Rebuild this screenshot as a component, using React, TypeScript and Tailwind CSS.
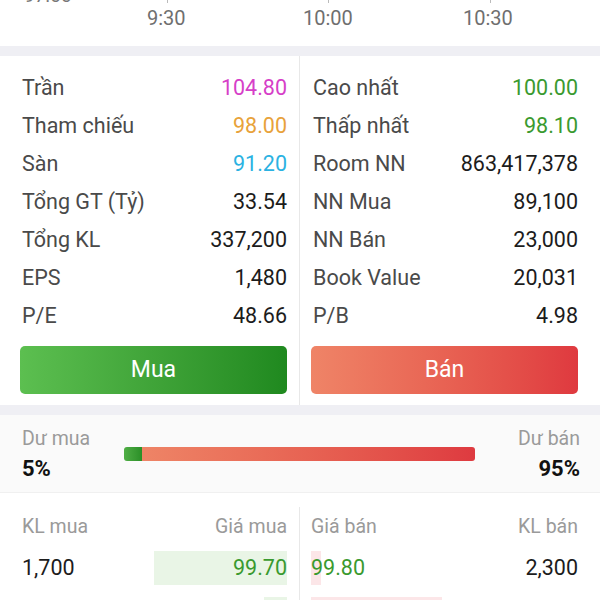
import React from 'react';

interface StatRow {
  label: string;
  value: string;
  color?: string;
}

const leftStats: StatRow[] = [
  { label: 'Trần', value: '104.80', color: 'text-[#d63fc8]' },
  { label: 'Tham chiếu', value: '98.00', color: 'text-[#e8a23a]' },
  { label: 'Sàn', value: '91.20', color: 'text-[#2bb2e2]' },
  { label: 'Tổng GT (Tỷ)', value: '33.54' },
  { label: 'Tổng KL', value: '337,200' },
  { label: 'EPS', value: '1,480' },
  { label: 'P/E', value: '48.66' },
];

const rightStats: StatRow[] = [
  { label: 'Cao nhất', value: '100.00', color: 'text-[#3a9a2f]' },
  { label: 'Thấp nhất', value: '98.10', color: 'text-[#3a9a2f]' },
  { label: 'Room NN', value: '863,417,378' },
  { label: 'NN Mua', value: '89,100' },
  { label: 'NN Bán', value: '23,000' },
  { label: 'Book Value', value: '20,031' },
  { label: 'P/B', value: '4.98' },
];

const bids = [
  { vol: '1,700', price: '99.70', pct: 100 },
  { vol: '8,500', price: '99.60', pct: 17 },
];

const asks = [
  { vol: '2,300', price: '99.80', pct: 8 },
  { vol: '5,100', price: '99.90', pct: 100 },
];

const StatList: React.FC<{ rows: StatRow[] }> = ({ rows }) => (
  <div className="flex flex-col">
    {rows.map((r) => (
      <div key={r.label} className="flex items-center justify-between h-[38px]">
        <span className="text-[#4a4a4a] pl-[2px]">{r.label}</span>
        <span className={r.color ?? 'text-[#1c1c1c]'}>{r.value}</span>
      </div>
    ))}
  </div>
);

export default function App() {
  return (
    <div className="w-[600px] h-[600px] overflow-hidden bg-white font-['Roboto',sans-serif] text-[21.5px]">
      {/* Chart axis (cut off) */}
      <div className="relative h-[46px] overflow-hidden bg-white">
        <span className="absolute left-[24px] top-[-18px] text-[19px] text-[#777]">97.00</span>
        <div className="absolute left-[167px] top-0 w-px h-[3px] bg-[#bbb]" />
        <div className="absolute left-[328px] top-0 w-px h-[3px] bg-[#bbb]" />
        <div className="absolute left-[490px] top-0 w-px h-[3px] bg-[#bbb]" />
        <span className="absolute left-[147px] top-[3px] text-[20px] text-[#6f6f6f]">9:30</span>
        <span className="absolute left-[303px] top-[3px] text-[20px] text-[#6f6f6f]">10:00</span>
        <span className="absolute left-[463px] top-[3px] text-[20px] text-[#6f6f6f]">10:30</span>
      </div>

      <div className="h-[10px] bg-[#efeff4]" />

      {/* Stats */}
      <div className="grid grid-cols-2">
        <div className="pl-5 pr-3 pt-[13px] pb-[11px] border-r border-[#e8e8e8]">
          <StatList rows={leftStats} />
          <button className="mt-[11px] w-full h-12 rounded-[5px] bg-gradient-to-r from-[#5cbf50] to-[#1f891f] text-white text-[23px]">
            Mua
          </button>
        </div>
        <div className="pl-[11px] pr-[22px] pt-[13px] pb-[11px]">
          <StatList rows={rightStats} />
          <button className="mt-[11px] w-full h-12 rounded-[5px] bg-gradient-to-r from-[#ef8467] to-[#df393f] text-white text-[23px]">
            Bán
          </button>
        </div>
      </div>

      <div className="h-[10px] bg-[#efeff4]" />

      {/* Dư mua / Dư bán */}
      <div className="flex px-[20px] pt-[12px] h-[77px] bg-[#fafafa]">
        <div className="w-[104px] flex flex-col">
          <span className="text-[19.5px] leading-[24px] text-[#9a9a9a] pl-[2px]">Dư mua</span>
          <span className="text-[22px] leading-[36px] font-bold text-[#111] pl-[2px]">5%</span>
        </div>
        <div className="w-[351px] h-[14px] mt-[20px] rounded-[3px] flex overflow-hidden">
          <div className="w-[5%] bg-gradient-to-r from-[#4fae45] to-[#2a8f27]" />
          <div className="flex-1 bg-gradient-to-r from-[#ee8466] to-[#de3a40]" />
        </div>
        <div className="flex-1 flex flex-col items-end">
          <span className="text-[19.5px] leading-[24px] text-[#9a9a9a]">Dư bán</span>
          <span className="text-[22px] leading-[36px] font-bold text-[#111]">95%</span>
        </div>
      </div>

      {/* Order book */}
      <div className="bg-white pt-[14px] border-t border-[#f0f0f0]">
        <div className="grid grid-cols-2">
          <div className="pl-5 pr-3 pt-[8px] border-r border-[#e8e8e8]">
            <div className="flex justify-between text-[19.5px] leading-[24px] text-[#9a9a9a]">
              <span className="pl-[2px]">KL mua</span>
              <span>Giá mua</span>
            </div>
            <div className="flex flex-col gap-3 mt-3">
              {bids.map((b) => (
                <div key={b.price} className="relative flex justify-between items-center h-[34px]">
                  <div
                    className="absolute right-0 top-0 h-full bg-[#e9f5e6]"
                    style={{ width: `${(b.pct / 100) * 133}px` }}
                  />
                  <span className="relative text-[#1c1c1c] pl-[2px]">{b.vol}</span>
                  <span className="relative text-[#3a9a2f]">{b.price}</span>
                </div>
              ))}
            </div>
          </div>
          <div className="pl-[11px] pr-[22px] pt-[8px]">
            <div className="flex justify-between text-[19.5px] leading-[24px] text-[#9a9a9a]">
              <span>Giá bán</span>
              <span>KL bán</span>
            </div>
            <div className="flex flex-col gap-3 mt-3">
              {asks.map((a) => (
                <div key={a.price} className="relative flex justify-between items-center h-[34px]">
                  <div
                    className="absolute left-0 top-0 h-full bg-[#fce6e8]"
                    style={{ width: `${(a.pct / 100) * 131}px` }}
                  />
                  <span className="relative text-[#3a9a2f]">{a.price}</span>
                  <span className="relative text-[#1c1c1c]">{a.vol}</span>
                </div>
              ))}
            </div>
          </div>
        </div>
      </div>
    </div>
  );
}
